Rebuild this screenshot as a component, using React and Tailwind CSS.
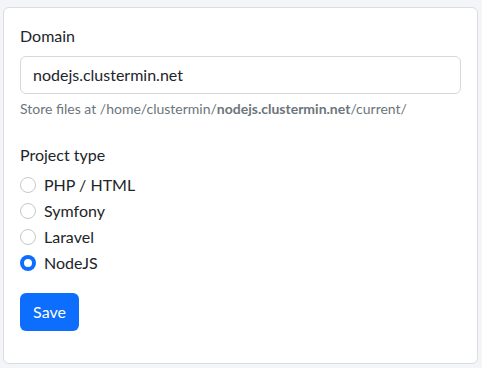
export default function App() {
  const options = ["PHP / HTML", "Symfony", "Laravel", "NodeJS"];
  return (
    <div className="w-[482px] h-[368px] bg-[#f3f5f8] pt-[7px] pl-[3px] pr-[4px]" style={{ fontFamily: '"Segoe UI", Lato, sans-serif' }}>
      <div className="bg-white border border-[#dadde1] rounded-[6px] p-4 pb-8 text-[#212529] text-[16px] leading-6">
        <label className="block mb-2">Domain</label>
        <div className="h-[38px] border border-[#d4d8dc] rounded-[6px] px-3 flex items-center">nodejs.clustermin.net</div>
        <div className="mt-1 text-[14px] leading-[21px] text-[#6c757d]">
          Store files at /home/clustermin/<b className="font-bold">nodejs.clustermin.net</b>/current/
        </div>
        <div className="mt-6 mb-[6px]">Project type</div>
        {options.map((o) => {
          const checked = o === "NodeJS";
          return (
            <div key={o} className="flex items-center h-6 mb-[2px]">
              {checked ? (
                <span className="w-4 h-4 rounded-full bg-[#0d6efd] flex items-center justify-center">
                  <span className="w-2 h-2 rounded-full bg-white" />
                </span>
              ) : (
                <span className="w-4 h-4 rounded-full border border-[#c4c8cc] bg-white" />
              )}
              <span className="ml-2">{o}</span>
            </div>
          );
        })}
        <button className="mt-4 h-[38px] w-[59px] rounded-[6px] bg-[#0d6efd] text-white">Save</button>
      </div>
    </div>
  );
}
